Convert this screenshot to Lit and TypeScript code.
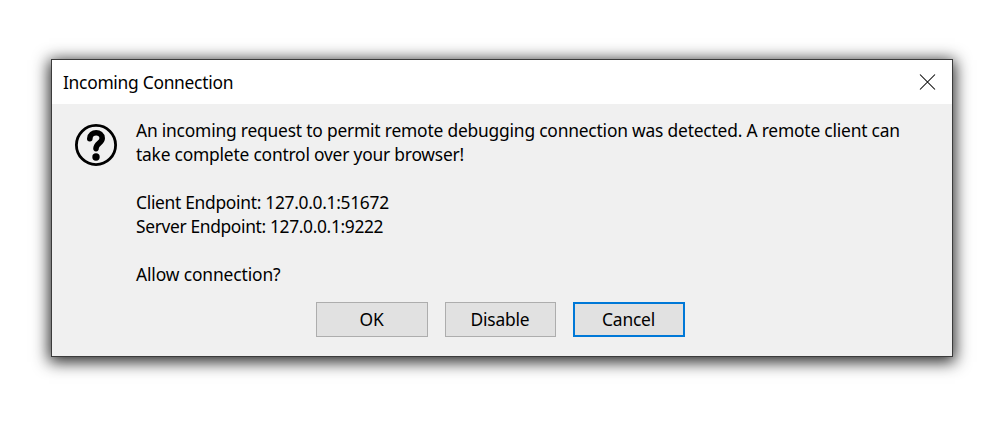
import { LitElement, html, css } from "lit";
import { customElement, property } from "lit/decorators.js";

@customElement("dialog-button")
class DialogButton extends LitElement {
  @property() label = "";
  static styles = css`
    :host { display: block; }
    button {
      box-sizing: border-box;
      width: 100%;
      height: 35px;
      margin: 0;
      padding: 0 1px 1px 0;
      border: 1px solid #adadad;
      border-radius: 0;
      background: #e1e1e1;
      color: #000;
      font: inherit;
      letter-spacing: inherit;
      display: block;
      outline: none;
    }
    :host([focused]) button { border: 2px solid #0078d7; }
  `;
  render() {
    return html`<button type="button">${this.label}</button>`;
  }
}

@customElement("app-root")
class AppRoot extends LitElement {
  static styles = css`
    :host {
      display: block;
      box-sizing: border-box;
      height: 428px;
      padding: 59px 48px 0 51px;
      background: #fff;
      color: #000;
      overflow: hidden;
      font: 17.4px/24px "Noto Sans", "Open Sans", sans-serif;
      letter-spacing: -0.2px;
    }
    .dialog {
      box-sizing: border-box;
      width: 902px;
      height: 298px;
      border: 1px solid #3b3b3b;
      background: #f0f0f0;
      box-shadow: 0 3px 15px 2px rgba(0, 0, 0, 0.85);
      display: flex;
      flex-direction: column;
    }
    .titlebar {
      height: 44px;
      background: #fff;
      display: flex;
      align-items: center;
      justify-content: space-between;
      padding: 0 16px 0 11px;
      box-sizing: border-box;
    }
    .title { letter-spacing: -0.28px; }
    .close { display: block; }
    .body {
      display: flex;
      padding: 14px 0 0 22px;
      gap: 18px;
    }
    .icon { display: block; margin-top: 6px; flex: none; }
    .line { height: 24px; white-space: pre; }
    .request { letter-spacing: -0.2px; }
    .warning { letter-spacing: -0.21px; }
    .client { letter-spacing: -0.3px; }
    .server { letter-spacing: -0.35px; }
    .question { letter-spacing: -0.12px; }
    .actions {
      display: grid;
      grid-template-columns: 112px 111px 112px;
      column-gap: 17px;
      margin: 16px 0 0 264px;
    }
  `;
  render() {
    return html`
      <section class="dialog" role="dialog">
        <header class="titlebar">
          <span class="title">Incoming Connection</span>
          <svg class="close" width="17" height="16" viewBox="0 0 17 16">
            <path d="M1 .5l15 15M16 .5l-15 15" fill="none" stroke="#000" stroke-width="1.05" />
          </svg>
        </header>
        <div class="body">
          <svg class="icon" width="44" height="44" viewBox="0 0 44 44">
            <circle cx="22" cy="21" r="19.6" fill="none" stroke="#000" stroke-width="2.8" />
            <path d="M15.8 14.6C16.2 6.8 28.2 7 28.2 14.2C28.2 18.9 22 19.4 22 24.6" fill="none" stroke="#000" stroke-width="5.6" stroke-linecap="round" />
            <circle cx="22" cy="33" r="3.7" />
          </svg>
          <div class="message">
            <div class="line request">An incoming request to permit remote debugging connection was detected. A remote client can</div>
            <div class="line warning">take complete control over your browser!</div>
            <div class="line"></div>
            <div class="line client">Client Endpoint: 127.0.0.1:51672</div>
            <div class="line server">Server Endpoint: 127.0.0.1:9222</div>
            <div class="line"></div>
            <div class="line question">Allow connection?</div>
          </div>
        </div>
        <footer class="actions">
          <dialog-button label="OK"></dialog-button>
          <dialog-button label="Disable"></dialog-button>
          <dialog-button label="Cancel" focused></dialog-button>
        </footer>
      </section>
    `;
  }
}
